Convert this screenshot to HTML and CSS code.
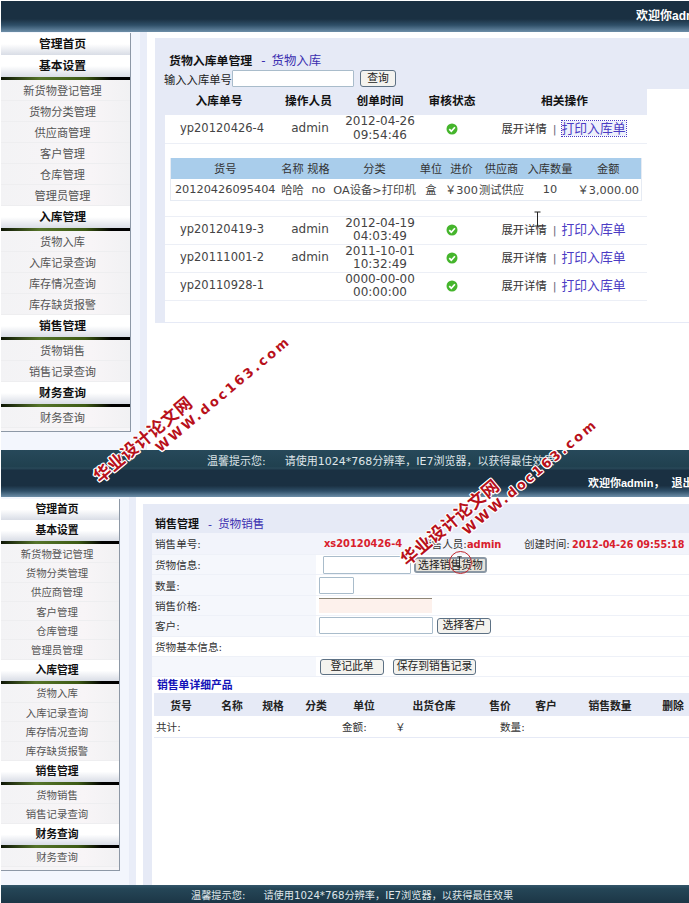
FILE: index.html
```html
<!DOCTYPE html>
<html lang="zh-CN">
<head>
<meta charset="utf-8">
<title>进销存管理</title>
<link rel="stylesheet" href="styles.css">
</head>
<body>
<div class="page">

  <!-- Stock-in screen -->
  <section class="screen screen-in">
    <header class="topbar"><span>欢迎你admin，</span><span>退出</span></header>
    <div class="workspace">
      <aside class="aside">
        <nav class="nav">
          <div class="nav-head">管理首页</div>
          <div class="nav-head nav-open">基本设置</div>
          <a class="nav-item">新货物登记管理</a><a class="nav-item">货物分类管理</a><a class="nav-item">供应商管理</a><a class="nav-item">客户管理</a><a class="nav-item">仓库管理</a><a class="nav-item">管理员管理</a>
          <div class="nav-head nav-open">入库管理</div>
          <a class="nav-item">货物入库</a><a class="nav-item">入库记录查询</a><a class="nav-item">库存情况查询</a><a class="nav-item">库存缺货报警</a>
          <div class="nav-head nav-open">销售管理</div>
          <a class="nav-item">货物销售</a><a class="nav-item">销售记录查询</a>
          <div class="nav-head nav-open">财务查询</div>
          <a class="nav-item">财务查询</a>
        </nav>
      </aside>
      <div class="gutter"></div>
      <main class="panel-in">
        <div class="panel-top">
          <h1 class="crumb"><b>货物入库单管理</b><span class="crumb-sep">-</span><a class="crumb-link">货物入库</a></h1>
          <div class="search"><label class="search-label">输入入库单号</label><input class="field field-search" type="text"><button class="btn btn-query" type="button">查询</button></div>
        </div>
        <div class="list-wrap">
          <div class="list-col">
            <table class="orders">
              <colgroup><col class="c-no"><col class="c-user"><col class="c-date"><col class="c-state"><col class="c-act"></colgroup>
              <thead><tr><th>入库单号</th><th>操作人员</th><th>创单时间</th><th>审核状态</th><th>相关操作</th></tr></thead>
              <tbody>
                <tr class="order"><td>yp20120426-4</td><td>admin</td><td>2012-04-26<br>09:54:46</td><td><svg class="ok" viewBox="0 0 14 14"><circle cx="7" cy="7" r="6.4" fill="#45b52c"/><path d="M3.8 7.2 6.2 9.6 10.4 5" fill="none" stroke="#fff" stroke-width="2"/></svg></td><td class="acts">展开详情<span class="pipe">|</span><a class="print print-focus">打印入库单</a></td></tr>
                <tr class="detail"><td colspan="5">
                  <table class="items">
                    <colgroup><col class="i-no"><col class="i-name"><col class="i-spec"><col class="i-cat"><col class="i-unit"><col class="i-cost"><col class="i-sup"><col class="i-qty"><col class="i-sum"></colgroup>
                    <thead><tr><th>货号</th><th>名称</th><th>规格</th><th>分类</th><th>单位</th><th>进价</th><th>供应商</th><th>入库数量</th><th>金额</th></tr></thead>
                    <tbody><tr><td>20120426095404</td><td>哈哈</td><td>no</td><td>OA设备&gt;打印机</td><td>盒</td><td>￥300</td><td>测试供应</td><td>10</td><td>￥3,000.00</td></tr></tbody>
                  </table>
                </td></tr>
                <tr class="order"><td>yp20120419-3</td><td>admin</td><td>2012-04-19<br>04:03:49</td><td><svg class="ok" viewBox="0 0 14 14"><circle cx="7" cy="7" r="6.4" fill="#45b52c"/><path d="M3.8 7.2 6.2 9.6 10.4 5" fill="none" stroke="#fff" stroke-width="2"/></svg></td><td class="acts">展开详情<span class="pipe">|</span><a class="print">打印入库单</a></td></tr>
                <tr class="order"><td>yp20111001-2</td><td>admin</td><td>2011-10-01<br>10:32:49</td><td><svg class="ok" viewBox="0 0 14 14"><circle cx="7" cy="7" r="6.4" fill="#45b52c"/><path d="M3.8 7.2 6.2 9.6 10.4 5" fill="none" stroke="#fff" stroke-width="2"/></svg></td><td class="acts">展开详情<span class="pipe">|</span><a class="print">打印入库单</a></td></tr>
                <tr class="order"><td>yp20110928-1</td><td></td><td>0000-00-00<br>00:00:00</td><td><svg class="ok" viewBox="0 0 14 14"><circle cx="7" cy="7" r="6.4" fill="#45b52c"/><path d="M3.8 7.2 6.2 9.6 10.4 5" fill="none" stroke="#fff" stroke-width="2"/></svg></td><td class="acts">展开详情<span class="pipe">|</span><a class="print">打印入库单</a></td></tr>
                <tr class="filler"><td colspan="5"></td></tr>
              </tbody>
            </table>
          </div>
          <div class="list-blank"></div>
        </div>
      </main>
    </div>
    <footer class="footbar"><span>温馨提示您:</span><span>请使用1024*768分辨率，IE7浏览器，以获得最佳效果</span></footer>
  </section>

  <!-- Sales screen -->
  <section class="screen screen-sale">
    <header class="topbar"><span>欢迎你admin，</span><span>退出</span></header>
    <div class="workspace">
      <aside class="aside">
        <nav class="nav">
          <div class="nav-head">管理首页</div>
          <div class="nav-head nav-open">基本设置</div>
          <a class="nav-item">新货物登记管理</a><a class="nav-item">货物分类管理</a><a class="nav-item">供应商管理</a><a class="nav-item">客户管理</a><a class="nav-item">仓库管理</a><a class="nav-item">管理员管理</a>
          <div class="nav-head nav-open">入库管理</div>
          <a class="nav-item">货物入库</a><a class="nav-item">入库记录查询</a><a class="nav-item">库存情况查询</a><a class="nav-item">库存缺货报警</a>
          <div class="nav-head nav-open">销售管理</div>
          <a class="nav-item">货物销售</a><a class="nav-item">销售记录查询</a>
          <div class="nav-head nav-open">财务查询</div>
          <a class="nav-item">财务查询</a>
        </nav>
      </aside>
      <div class="gutter"></div>
      <main class="panel-sale">
        <h1 class="crumb"><b>销售管理</b><span class="crumb-sep">-</span><a class="crumb-link">货物销售</a></h1>
        <div class="sheet">
          <div class="form-row form-meta">
            <div class="form-label">销售单号:</div>
            <div class="form-value meta-line"><b class="red meta-no">xs20120426-4</b><span class="meta-user">销售人员:<b class="red">admin</b></span><span class="meta-time">创建时间:<b class="red">2012-04-26 09:55:18</b></span></div>
          </div>
          <div class="form-row">
            <div class="form-label">货物信息:</div>
            <div class="form-value"><input class="field field-goods" type="text"><button class="btn btn-pick" type="button">选择销售货物</button></div>
          </div>
          <div class="form-row">
            <div class="form-label">数量:</div>
            <div class="form-value"><input class="field field-qty" type="text"></div>
          </div>
          <div class="form-row">
            <div class="form-label">销售价格:</div>
            <div class="form-value"><input class="field field-price" type="text"></div>
          </div>
          <div class="form-row">
            <div class="form-label">客户:</div>
            <div class="form-value"><input class="field field-client" type="text"><button class="btn btn-client" type="button">选择客户</button></div>
          </div>
          <div class="form-row form-plain">
            <div class="form-label">货物基本信息:</div>
            <div class="form-value"></div>
          </div>
          <div class="form-row">
            <div class="form-label"></div>
            <div class="form-value"><button class="btn btn-register" type="button">登记此单</button><button class="btn btn-save" type="button">保存到销售记录</button></div>
          </div>
          <h2 class="sheet-title">销售单详细产品</h2>
          <table class="sale-lines">
            <colgroup><col class="s-no"><col class="s-name"><col class="s-spec"><col class="s-cat"><col class="s-unit"><col class="s-store"><col class="s-price"><col class="s-client"><col class="s-qty"><col class="s-del"></colgroup>
            <thead><tr><th>货号</th><th>名称</th><th>规格</th><th>分类</th><th>单位</th><th>出货仓库</th><th>售价</th><th>客户</th><th>销售数量</th><th>删除</th></tr></thead>
            <tbody><tr><td class="sum-label" colspan="4">共计:</td><td>金额:</td><td class="sum-yen">￥</td><td colspan="2" class="sum-qty">数量:</td><td colspan="2"></td></tr></tbody>
          </table>
        </div>
      </main>
    </div>
    <footer class="footbar"><span>温馨提示您:</span><span>请使用1024*768分辨率，IE7浏览器，以获得最佳效果</span></footer>
  </section>

  <!-- Site stamps and pointer marks lying over the screens -->
  <div class="stamp stamp-one"><span class="stamp-cn">华业设计论文网</span><span class="stamp-en">WWW.doc163.com</span></div>
  <div class="stamp stamp-two"><span class="stamp-cn">华业设计论文网</span><span class="stamp-en">WWW.doc163.com</span></div>
  <svg class="ibeam" viewBox="0 0 9 16"><path d="M1.5 1H7.5M4.5 1V15M1.5 15H7.5" fill="none" stroke="#222" stroke-width="1"/></svg>
  <svg class="ibeam ibeam-small" viewBox="0 0 9 16"><path d="M1.5 1H7.5M4.5 1V15M1.5 15H7.5" fill="none" stroke="#222" stroke-width="1.2"/></svg>
  <div class="click-ring"></div>
</div>
</body>
</html>
```
FILE: styles.css
```css
* { box-sizing: border-box; }

html, body { margin: 0; padding: 0; background: #fff; }

body {
  font-family: "DejaVu Sans", "Noto Sans CJK SC", sans-serif;
  font-size: 11.5px;
  color: #333;
}

.page {
  position: relative;
  width: 689px;
  height: 903px;
  overflow: hidden;
  padding-left: 1px;
}

/* Per-screen metrics */
.screen-in {
  --nav-width: 130px;
  --aside-width: 139px;
  --head-h: 22px;
  --row-h: 21px;
  --nav-font: 11.2px;
  --head-font: 11.8px;
  height: 470px;
  padding-top: 1px;
}

.screen-sale {
  --nav-width: 119px;
  --aside-width: 128px;
  --head-h: 21px;
  --row-h: 19.3px;
  --nav-font: 10.4px;
  --head-font: 10.8px;
  height: 433px;
}

.screen { display: flex; flex-direction: column; }

/* Top and bottom bars */
.topbar {
  display: flex;
  gap: 7px;
  align-items: center;
  color: #fff;
  font-family: "Liberation Sans", "Noto Sans CJK SC", sans-serif;
  font-weight: bold;
  font-size: 11px;
  white-space: nowrap;
  overflow: hidden;
  background: linear-gradient(#1a3042 0, #1a3042 58%, #2f4f68 78%, #6d8ea8 100%);
}

.screen-in .topbar { height: 31px; padding: 0 0 4px 635px; font-size: 12px; }
.screen-sale .topbar { height: 27px; padding: 0 0 3px 587px; }

.footbar {
  display: flex;
  gap: 19px;
  align-items: center;
  color: #dfe6ea;
  font-size: 11px;
  white-space: nowrap;
  background: linear-gradient(#27495a 0, #20404f 85%, #2a4a5a 90%, #1b3446 100%);
}

.screen-in .footbar { height: 20px; padding-left: 206px; }
.screen-sale .footbar {
  height: 18px;
  padding-left: 190px;
  font-size: 10.2px;
  gap: 18px;
  background: linear-gradient(#34566a 0, #254657 20%, #1c3646 100%);
}

/* Body of a screen */
.workspace { flex: 1; display: flex; min-height: 0; }

.aside {
  flex: none;
  width: var(--aside-width);
  background: #f3f6fd;
}

.screen-in .aside { padding-top: 1px; }
.screen-sale .aside { padding-top: 2px; }

.gutter { flex: none; width: 7px; background: #e9edf8; }

/* Side navigation */
.nav {
  width: var(--nav-width);
  padding-bottom: 3px;
  border-right: 1px solid #8d98a6;
  border-bottom: 1px solid #8d98a6;
  background: #f6f5f7;
}

.nav-head {
  display: flex;
  align-items: center;
  justify-content: center;
  height: var(--head-h);
  padding: 0 6px 3px 0;
  font-size: var(--head-font);
  font-weight: bold;
  color: #111;
  background: linear-gradient(#fff 0, #fff 50%, #d9dde6 100%);
}

.nav-open {
  height: calc(var(--head-h) + 3px);
  border-bottom: 3px solid;
  border-image: linear-gradient(90deg, #0b1204 0, #55742a 30%, #3d5a14 65%, #000 85%) 1;
}

.nav-item {
  display: flex;
  align-items: center;
  justify-content: center;
  height: var(--row-h);
  padding-right: 6px;
  font-size: var(--nav-font);
  color: #555;
  border-bottom: 1px solid #eeeef0;
  background: linear-gradient(90deg, #f3f3f5, #f8f5f7 70%, #f1f1f3);
}

/* Breadcrumb heading */
.crumb {
  margin: 0;
  font-size: 11.9px;
  font-weight: normal;
  color: #111;
}

.crumb-sep { margin: 0 6px 0 9px; color: #3b2fb0; }
.crumb-link { font-size: 12.4px; color: #3b2fb0; }

/* Stock-in panel */
.panel-in {
  flex: none;
  align-self: flex-start;
  width: 534px;
  height: 285px;
  margin: 6px 0 0 8px;
  display: flex;
  flex-direction: column;
  background: #e6eaf6;
}

.panel-top { height: 51px; padding: 15px 0 0 9px; }
.panel-in .crumb { padding-left: 5px; line-height: 15px; }

.search { display: flex; align-items: center; height: 17px; margin-top: 1px; }
.search-label { width: 68px; font-size: 11.3px; color: #222; white-space: nowrap; }

.field {
  height: 17px;
  padding: 0;
  background: #fff;
  border: 1px solid #a9bccb;
  border-radius: 1px;
}

.field-search { width: 122px; }

.btn {
  height: 16px;
  padding: 0;
  font-family: inherit;
  font-size: 10.8px;
  line-height: 14px;
  color: #222;
  background: #f4f3ef;
  border: 1px solid #5d7184;
  border-radius: 3px;
}

.btn-query { width: 36px; height: 17px; margin-left: 6px; }

.list-wrap { flex: 1; display: flex; min-height: 0; }

.list-col { flex: none; width: 492px; padding-left: 10px; }

.list-blank { flex: 1; background: #fff; margin: 0 0 1px 0; }

table { border-collapse: collapse; table-layout: fixed; }

.orders { width: 482px; background: #fff; }

.c-no { width: 108px; }
.c-user { width: 71px; }
.c-date { width: 72px; }
.c-state { width: 72px; }
.c-act { width: 159px; }

.orders > thead th {
  height: 26px;
  padding: 0 0 6px;
  font-size: 11.7px;
  color: #111;
  background: #e6eaf6;
}

.orders > thead th:last-child { padding-right: 6px; }

.order td {
  height: 28px;
  padding: 0;
  font-size: 12px;
  line-height: 13.5px;
  text-align: center;
  color: #444;
  border-bottom: 1px solid #eceff6;
}

.order td:first-child { padding-left: 6px; font-size: 11.5px; }
.order td:nth-child(2) { padding-left: 3px; }

.ok { display: block; width: 12px; height: 12px; margin: 0 auto; }

.order .acts { font-size: 11.3px; color: #333; padding-right: 8px; white-space: nowrap; }

.pipe { margin: 0 5px 0 6px; color: #667; }

.print { font-size: 12.8px; color: #4b3bc4; }
.print-focus { outline: 1px dotted #4b3bc4; background: #eef0fb; }

.detail td {
  height: 73px;
  padding: 14px 0 0;
  vertical-align: top;
  border-bottom: 1px solid #eceff6;
}

.filler td { height: 22px; padding: 0; }

.items {
  width: 471px;
  margin-left: 5px;
  background: #fff;
  border: 1px solid #e6ebf3;
  border-top: 0;
}

.i-no { width: 109px; }
.i-name { width: 26px; }
.i-spec { width: 26px; }
.i-cat { width: 86px; }
.i-unit { width: 27px; }
.i-cost { width: 34px; }
.i-sup { width: 46px; }
.i-qty { width: 51px; }
.i-sum { width: 66px; }

.detail .items th {
  height: 21px;
  padding: 0;
  font-size: 11.2px;
  font-weight: normal;
  color: #333;
  white-space: nowrap;
  background: #a9cdeb;
}

.detail .items td {
  height: 22px;
  padding: 0;
  font-size: 11.3px;
  text-align: center;
  vertical-align: middle;
  color: #444;
  white-space: nowrap;
  overflow: hidden;
  border-bottom: 0;
}

/* Sales panel */
.panel-sale {
  flex: none;
  width: 546px;
  margin: 7px 0 0 7px;
  padding-left: 9px;
  display: flex;
  flex-direction: column;
  background: #e6eaf6;
}

.panel-sale .crumb { height: 29px; padding: 13px 0 0 3px; line-height: 15px; font-size: 11px; }
.panel-sale .crumb-link { font-size: 11.6px; }

.sheet { flex: 1; background: #fff; font-size: 10.6px; color: #333; }

.form-row {
  display: flex;
  height: 20.4px;
  border-bottom: 1px solid #eef1f8;
  background: #f5f7fc;
}

.form-meta { height: 22px; background: #f2f4fb; }
.form-plain { background: #fff; }

.form-label {
  flex: none;
  display: flex;
  align-items: center;
  width: 164px;
  padding-left: 3px;
}

.form-value {
  flex: 1;
  display: flex;
  align-items: center;
  padding-left: 3px;
  background: #fff;
}

.form-meta .form-value { background: transparent; }

.meta-line { padding-left: 8px; white-space: nowrap; }
.red { color: #d9202c; font-weight: bold; font-size: 9.9px; }
.meta-no { width: 97px; }
.meta-user { width: 103px; }
.meta-time .red { font-size: 9.6px; margin-left: 2px; }

.field-goods { width: 88px; height: 18px; margin-left: 4px; }
.field-qty { width: 35px; }
.field-price { width: 113px; height: 15px; background: #fdf1ec; border: 0; border-top: 1px solid #8e8677; border-radius: 0; }
.field-client { width: 114px; }

.btn-pick { width: 73px; margin-left: 3px; background: #e6e4dc; border-width: 2px; border-color: #8a97a4; }
.btn-client { width: 54px; margin-left: 4px; }
.btn-register { width: 64px; margin-left: 1px; }
.btn-save { width: 83px; margin-left: 9px; }

.sheet-title {
  margin: 0;
  padding: 2px 0 0 5px;
  height: 16px;
  font-size: 10.8px;
  line-height: 13px;
  color: #1212b8;
}

.sale-lines { width: 546px; margin-left: 2px; }

.s-no { width: 54px; }
.s-name { width: 48px; }
.s-spec { width: 34px; }
.s-cat { width: 52px; }
.s-unit { width: 44px; }
.s-store { width: 96px; }
.s-price { width: 36px; }
.s-client { width: 56px; }
.s-qty { width: 72px; }
.s-del { width: 54px; }

.sale-lines th {
  height: 23px;
  padding: 0;
  font-size: 10.8px;
  color: #222;
  background: #e6eaf6;
  white-space: nowrap;
}

.sale-lines td {
  height: 21px;
  padding: 0;
  color: #333;
  white-space: nowrap;
  border-bottom: 1px solid #e6eaf6;
}

.sale-lines .sum-label { padding-left: 2px; }
.sale-lines .sum-yen { padding-left: 9px; }
.sale-lines .sum-qty { padding-left: 18px; }

/* Diagonal site stamps */
.stamp {
  position: absolute;
  width: 190px;
  height: 44px;
  font-weight: bold;
  color: #b8101a;
  white-space: nowrap;
  transform: rotate(-40deg);
  transform-origin: 0 100%;
  text-shadow: 1px 0 0 #fff, -1px 0 0 #fff, 0 1px 0 #fff, 0 -1px 0 #fff, 1px 1px 0 #fff, -1px -1px 0 #fff, 1px -1px 0 #fff, -1px 1px 0 #fff;
}

.stamp-one { left: 118px; top: 461px; }
.stamp-two { left: 425px; top: 544px; }

.stamp-cn {
  display: block;
  font-size: 17px;
  line-height: 20px;
  letter-spacing: 0.5px;
}

.stamp-en {
  display: block;
  margin: -4px 0 0 66px;
  font-family: "DejaVu Sans", sans-serif;
  font-size: 13px;
  line-height: 22px;
  letter-spacing: 2.6px;
}

/* Pointer and click marker */
.ibeam { position: absolute; left: 533px; top: 211px; width: 9px; height: 16px; }
.ibeam-small { left: 456px; top: 556px; width: 7px; height: 12px; }

.click-ring {
  position: absolute;
  left: 449px;
  top: 551px;
  width: 23px;
  height: 23px;
  border: 1.5px solid #c0272d;
  border-radius: 50%;
}
```
